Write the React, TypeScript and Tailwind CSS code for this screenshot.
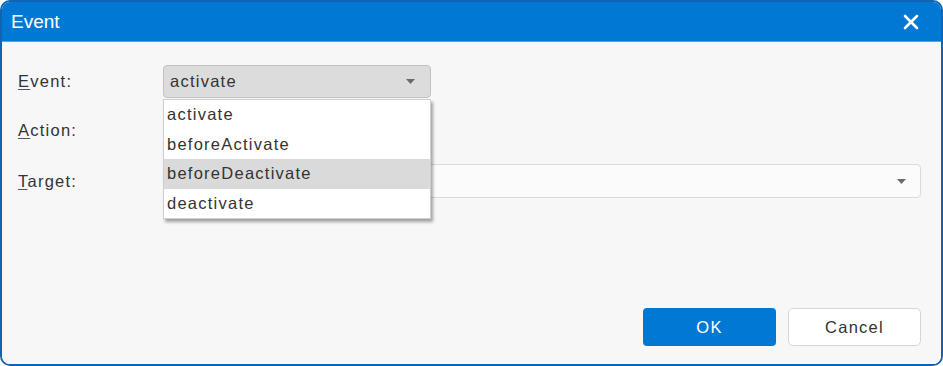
import { X } from 'lucide-react';

const events = ['activate', 'beforeActivate', 'beforeDeactivate', 'deactivate'];

function Caret() {
  return (
    <svg width="9" height="5" viewBox="0 0 9 5" className="shrink-0">
      <path d="M0 0h9L4.5 5z" fill="#6b6b6b" />
    </svg>
  );
}

export default function App() {
  const highlighted = 'beforeDeactivate';

  return (
    <div className="w-[943px] h-[366px] bg-white [font-family:'Liberation_Sans',Arial,sans-serif]">
      <div className="h-full flex flex-col rounded-[10px] border-2 border-[#1064b4] overflow-hidden">
        {/* Title bar */}
        <div className="h-[40px] shrink-0 bg-[#0078d4] border-b border-[#5aa0dc] flex items-center justify-between pl-[9px] pr-[18px]">
          <span className="text-white text-[19px] leading-none">Event</span>
          <X size={24} strokeWidth={2.6} className="text-white" />
        </div>

        {/* Body */}
        <div className="flex-1 flex flex-col bg-[#f7f7f7] pt-[23px] pl-[16px] pr-[20px] text-[16.5px] tracking-[1.25px] text-[#333]">
          <div className="flex flex-col gap-[16px]">
            <div className="flex items-center h-[33px]">
              <label className="w-[145px] shrink-0">
                <span className="underline underline-offset-2 decoration-[#555]">E</span>vent:
              </label>
              <div className="relative w-[268px]">
                <div className="h-[33px] flex items-center justify-between pl-[6px] pr-[15px] bg-[#dcdcdc] border border-[#c2c2c2] rounded-[4px]">
                  <span>activate</span>
                  <Caret />
                </div>
                {/* Open list */}
                <div className="absolute left-0 right-0 top-full mt-[1px] z-10 bg-white border border-[#cfcfcf] shadow-[2px_3px_3px_rgba(0,0,0,0.35)]">
                  {events.map((ev) => (
                    <div
                      key={ev}
                      className={
                        'h-[29.5px] flex items-center pl-[3px] ' +
                        (ev === highlighted ? 'bg-[#dadada]' : '')
                      }
                    >
                      {ev}
                    </div>
                  ))}
                </div>
              </div>
            </div>

            <div className="flex items-center h-[33px]">
              <label className="w-[145px] shrink-0">
                <span className="underline underline-offset-2 decoration-[#555]">A</span>ction:
              </label>
            </div>

            <div className="flex items-center h-[34px] mt-[1px]">
              <label className="w-[145px] shrink-0">
                <span className="underline underline-offset-2 decoration-[#555]">T</span>arget:
              </label>
              <div className="flex-1 h-[34px] flex items-center justify-end pr-[14px] bg-[#fbfbfb] border border-[#dadada] rounded-[4px]">
                <Caret />
              </div>
            </div>
          </div>

          {/* Footer */}
          <div className="mt-auto flex justify-end gap-[12px] pb-[18px]">
            <button className="w-[133px] h-[38px] rounded-[4px] bg-[#0078d4] text-white">OK</button>
            <button className="w-[133px] h-[38px] rounded-[5px] bg-white border border-[#d6d6d6] text-[#333]">
              Cancel
            </button>
          </div>
        </div>
      </div>
    </div>
  );
}
